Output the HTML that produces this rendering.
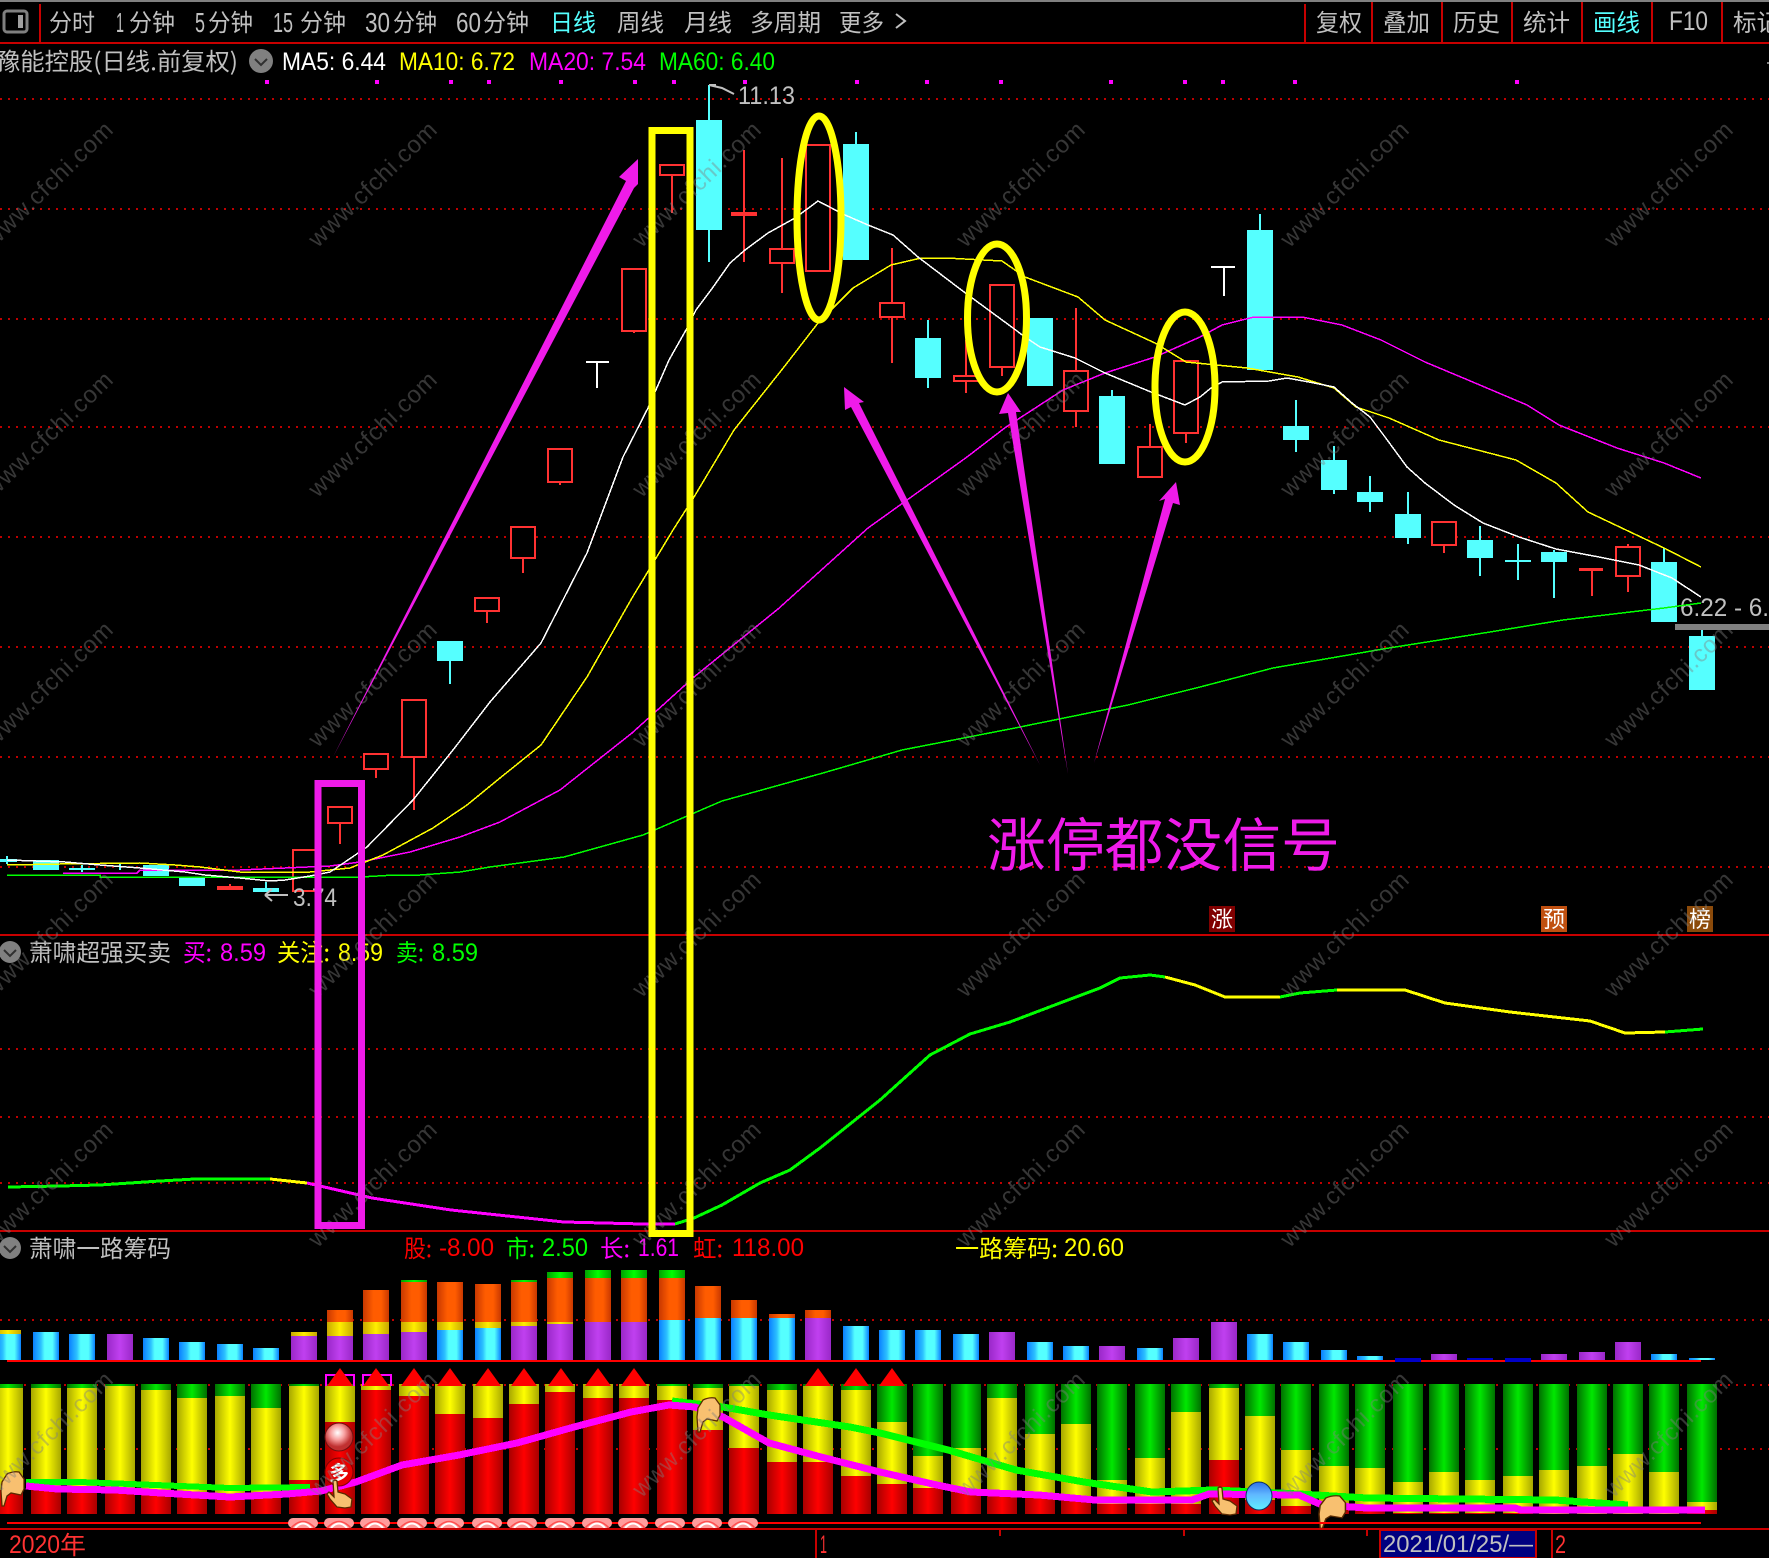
<!DOCTYPE html>
<html lang="zh"><head><meta charset="utf-8"><title>豫能控股</title>
<style>
html,body{margin:0;padding:0;background:#000;overflow:hidden}
svg{display:block;position:absolute;left:0;top:0}
text{font-family:"Liberation Sans","Noto Sans CJK SC",sans-serif}
.w text{font-size:24px;fill:#808080;opacity:.42;text-anchor:middle}
.c{font-family:"Noto Sans CJK SC","Liberation Sans",sans-serif}
.u rect{width:26px}
.l rect{width:30px;y:1384px}
.r rect{height:130px}
.q{shape-rendering:crispEdges}
</style></head><body>
<svg width="1769" height="1558" viewBox="0 0 1769 1558" xmlns="http://www.w3.org/2000/svg">
<defs>
<linearGradient id="c"><stop offset="0" stop-color="#0a80ff"/><stop offset=".3" stop-color="#2cc0ff"/><stop offset=".45" stop-color="#55ffff"/><stop offset=".75" stop-color="#55ffff"/><stop offset="1" stop-color="#0a80ff"/></linearGradient>
<linearGradient id="p"><stop offset="0" stop-color="#9a28c8"/><stop offset=".5" stop-color="#c040f0"/><stop offset="1" stop-color="#9a28c8"/></linearGradient>
<linearGradient id="o"><stop offset="0" stop-color="#c83800"/><stop offset=".4" stop-color="#ff5c00"/><stop offset=".7" stop-color="#ff5c00"/><stop offset="1" stop-color="#c83800"/></linearGradient>
<linearGradient id="e"><stop offset="0" stop-color="#c8a800"/><stop offset=".5" stop-color="#ffee00"/><stop offset="1" stop-color="#c8a800"/></linearGradient>
<linearGradient id="g"><stop offset="0" stop-color="#00a000"/><stop offset=".5" stop-color="#00ff00"/><stop offset="1" stop-color="#00a000"/></linearGradient>
<linearGradient id="R"><stop offset="0" stop-color="#a80000"/><stop offset=".5" stop-color="#ff0000"/><stop offset="1" stop-color="#a80000"/></linearGradient>
<linearGradient id="Y"><stop offset="0" stop-color="#a8a800"/><stop offset=".5" stop-color="#ffff00"/><stop offset="1" stop-color="#a8a800"/></linearGradient>
<linearGradient id="G"><stop offset="0" stop-color="#007000"/><stop offset=".5" stop-color="#00e800"/><stop offset="1" stop-color="#007000"/></linearGradient>
<radialGradient id="b1" cx=".45" cy=".35"><stop offset="0" stop-color="#ffffff"/><stop offset=".5" stop-color="#f8a0a0"/><stop offset="1" stop-color="#c03030"/></radialGradient>
<linearGradient id="b2" x2="0" y2="1"><stop offset="0" stop-color="#3070e8"/><stop offset=".45" stop-color="#60b8ff"/><stop offset="1" stop-color="#60f0ff"/></linearGradient>
<path id="h" d="M1 10L6 2Q12 -1 18 0L23 7L23 17L20 23L10 21L6 24L3 34L1 34L0 19Z" fill="#f8c070" stroke="#5a2a00" stroke-width="1.3"/>
<path id="k" d="M6 2Q8 0 10 2L11 13L18 15L25 20L24 28L18 29L10 28L3 20L0 15L2 13L7 18Z" fill="#f8c070" stroke="#5a2a00" stroke-width="1.3"/>
<g id="pl"><rect x="-15" y="0" width="30" height="10" rx="5" fill="#ff9c9c"/><path d="M-12 10Q0 -3 12 10" fill="none" stroke="#ff5050" stroke-width="1.5"/><path d="M-8 10Q0 1 8 10" fill="none" stroke="#fff" stroke-width="2"/></g>
</defs>
<rect width="1769" height="1558" fill="#000"/>
<rect width="1769" height="2" fill="#808080"/>

<!-- dotted grid -->
<path class="q" d="M0 99H1769M0 209H1769M0 319H1769M0 427H1769M0 537H1769M0 647H1769M0 757H1769M0 867H1769M0 1049H1769M0 1117H1769M0 1183H1769M0 1320H1769M0 1385H1769M0 1449H1769" stroke="#c00000" stroke-width="2" stroke-dasharray="2 6" fill="none"/>

<!-- toolbar -->
<g fill="#c0c0c0" font-size="24">
<rect x="4" y="11" width="23" height="21" rx="3" fill="none" stroke="#808080" stroke-width="3"/><rect x="18" y="15" width="5" height="13" fill="#a0a0a0"/>
<text class="c" x="49" y="31" textLength="46" lengthAdjust="spacingAndGlyphs">分时</text>
<text x="116" y="32" font-size="28" textLength="8" lengthAdjust="spacingAndGlyphs">1</text><text class="c" x="129" y="31" textLength="46" lengthAdjust="spacingAndGlyphs">分钟</text>
<text x="195" y="32" font-size="28" textLength="10" lengthAdjust="spacingAndGlyphs">5</text><text class="c" x="208" y="31" textLength="45" lengthAdjust="spacingAndGlyphs">分钟</text>
<text x="273" y="32" font-size="28" textLength="20" lengthAdjust="spacingAndGlyphs">15</text><text class="c" x="300" y="31" textLength="46" lengthAdjust="spacingAndGlyphs">分钟</text>
<text x="365" y="32" font-size="28" textLength="25" lengthAdjust="spacingAndGlyphs">30</text><text class="c" x="393" y="31" textLength="44" lengthAdjust="spacingAndGlyphs">分钟</text>
<text x="456" y="32" font-size="28" textLength="25" lengthAdjust="spacingAndGlyphs">60</text><text class="c" x="483" y="31" textLength="46" lengthAdjust="spacingAndGlyphs">分钟</text>
<text class="c" x="550" y="31" textLength="46" lengthAdjust="spacingAndGlyphs" fill="#55ffff">日线</text>
<text class="c" x="617" y="31" textLength="47" lengthAdjust="spacingAndGlyphs">周线</text>
<text class="c" x="684" y="31" textLength="48" lengthAdjust="spacingAndGlyphs">月线</text>
<text class="c" x="750" y="31" textLength="71" lengthAdjust="spacingAndGlyphs">多周期</text>
<text class="c" x="839" y="31" textLength="45" lengthAdjust="spacingAndGlyphs">更多</text>
<path d="M896 14L905 21L896 28" fill="none" stroke="#c0c0c0" stroke-width="2"/>
<text class="c" x="1316" y="31" textLength="46" lengthAdjust="spacingAndGlyphs">复权</text>
<text class="c" x="1383" y="31" textLength="47" lengthAdjust="spacingAndGlyphs">叠加</text>
<text class="c" x="1453" y="31" textLength="47" lengthAdjust="spacingAndGlyphs">历史</text>
<text class="c" x="1523" y="31" textLength="47" lengthAdjust="spacingAndGlyphs">统计</text>
<text class="c" x="1593" y="31" textLength="47" lengthAdjust="spacingAndGlyphs" fill="#55ffff">画线</text>
<text x="1669" y="30" font-size="27" textLength="39" lengthAdjust="spacingAndGlyphs">F10</text>
<text class="c" x="1733" y="31" textLength="47" lengthAdjust="spacingAndGlyphs">标记</text>
</g>
<path class="q" d="M40 4V42M1305 4V42M1372 2V42M1442 2V42M1512 2V42M1582 2V42M1652 2V42M1722 2V42" stroke="#c80000" stroke-width="2"/>
<rect y="42" width="1769" height="2" fill="#c80000"/>

<!-- header row -->
<text class="c" x="-4" y="70" font-size="24" fill="#c0c0c0" textLength="242" lengthAdjust="spacingAndGlyphs">豫能控股(日线.前复权)</text>
<circle cx="261" cy="61" r="12" fill="#808080"/><path d="M255 59L261 65L267 59" fill="none" stroke="#303030" stroke-width="2"/>
<g font-size="25">
<text x="282" y="70" fill="#fff" textLength="104" lengthAdjust="spacingAndGlyphs">MA5: 6.44</text>
<text x="399" y="70" fill="#ffff00" textLength="116" lengthAdjust="spacingAndGlyphs">MA10: 6.72</text>
<text x="529" y="70" fill="#ff00ff" textLength="117" lengthAdjust="spacingAndGlyphs">MA20: 7.54</text>
<text x="659" y="70" fill="#00ff00" textLength="116" lengthAdjust="spacingAndGlyphs">MA60: 6.40</text>
</g>
<path class="q" d="M265 80h4v4h-4zM375 80h4v4h-4zM449 80h4v4h-4zM487 80h4v4h-4zM559 80h4v4h-4zM633 80h4v4h-4zM672 80h4v4h-4zM743 80h4v4h-4zM855 80h4v4h-4zM925 80h4v4h-4zM999 80h4v4h-4zM1109 80h4v4h-4zM1183 80h4v4h-4zM1221 80h4v4h-4zM1293 80h4v4h-4zM1515 80h4v4h-4z" fill="#ff00ff"/>
<rect x="1767" y="62" width="2" height="2" fill="#808080"/>

<!-- candles -->
<g class="q">
<path d="M340 823V844M376 769V778M414 757V810M487 611V623M523 558V573M560 482V485M634 331V333M672 175V213M744 150V262M782 158V249M782 263V293M892 248V303M892 317V363M966 340V376M966 381V393M1002 367V376M1076 308V371M1076 411V427M1150 424V447M1186 433V443M1444 545V553M1592 569V596M1628 544V547M1628 576V592" stroke="#ff3232" stroke-width="2" fill="none"/>
<g fill="#000" stroke="#ff3232" stroke-width="2">
<rect x="293" y="850" width="24" height="41"/><rect x="328" y="807" width="24" height="16"/><rect x="364" y="754" width="24" height="15"/><rect x="402" y="700" width="24" height="57"/><rect x="475" y="598" width="24" height="13"/><rect x="511" y="527" width="24" height="31"/><rect x="548" y="449" width="24" height="33"/><rect x="622" y="269" width="24" height="62"/><rect x="660" y="165" width="24" height="10"/><rect x="770" y="249" width="24" height="14"/><rect x="806" y="145" width="24" height="126"/><rect x="880" y="303" width="24" height="14"/><rect x="954" y="376" width="24" height="5"/><rect x="990" y="285" width="24" height="82"/><rect x="1064" y="371" width="24" height="40"/><rect x="1138" y="447" width="24" height="30"/><rect x="1174" y="361" width="24" height="72"/><rect x="1432" y="522" width="24" height="23"/><rect x="1616" y="547" width="24" height="29"/>
</g>
<path d="M217 886h26v4h-26zM731 212h26v4h-26zM1579 568h24v3h-24z" fill="#ff3232"/><rect x="229" y="884" width="2" height="3" fill="#ff3232"/>
<path d="M450 661V684M709 85V120M709 230V262M856 132V144M928 320V338M928 378V388M1112 390V396M1260 214V230M1296 400V426M1296 440V452M1334 446V460M1334 490V494M1370 476V492M1370 502V512M1408 492V514M1408 538V544M1480 526V540M1480 558V576M1518 544V580M1554 550V552M1554 562V598M1664 548V562M1702 630V636M82 865V872M120 863V870M266 882V888M7 856V864" stroke="#55ffff" stroke-width="2" fill="none"/>
<path d="M437 641h26v20h-26zM696 120h26v110h-26zM843 144h26v116h-26zM915 338h26v40h-26zM1027 318h26v68h-26zM1099 396h26v68h-26zM1247 230h26v140h-26zM1283 426h26v14h-26zM1321 460h26v30h-26zM1357 492h26v10h-26zM1395 514h26v24h-26zM1467 540h26v18h-26zM1505 560h26v2h-26zM1541 552h26v10h-26zM1651 562h26v60h-26zM1689 636h26v54h-26zM33 860h26v10h-26zM143 865h26v11h-26zM179 878h26v8h-26zM253 888h26v4h-26zM69 868h26v2h-26zM0 859h17v3h-17z" fill="#55ffff"/>
<path d="M586 362H609M597 362V388M1211 267H1235M1224 267V296" stroke="#fff" stroke-width="2" fill="none"/>
</g>
<rect x="1675" y="624" width="94" height="6" fill="#808080"/>
<text x="1680" y="616" font-size="25" fill="#c0c0c0" textLength="89" lengthAdjust="spacingAndGlyphs">6.22 - 6.</text>
<path d="M709 85L722 88L734 94" fill="none" stroke="#c0c0c0" stroke-width="2"/><path d="M709 85H716" stroke="#c0c0c0" stroke-width="2"/>
<text x="738" y="104" font-size="25" fill="#c0c0c0" textLength="57" lengthAdjust="spacingAndGlyphs">11.13</text>
<path d="M265 895H288M265 895L272 889M265 895L272 901" fill="none" stroke="#c0c0c0" stroke-width="2"/>
<text x="293" y="906" font-size="25" fill="#c0c0c0" textLength="44" lengthAdjust="spacingAndGlyphs">3.74</text>

<!-- moving averages -->
<g fill="none" stroke-width="1.5" class="q">
<polyline stroke="#00ff00" points="7,875 100,875 100,877 360,877 395,875 420,875 460,872 490,867 564,857 643,835 722,801 823,773 902,750 1015,728 1128,705 1200,687 1273,668 1389,648 1490,632 1563,620 1664,608 1701,603"/>
<polyline stroke="#ff00ff" points="63,873 137,873 140,870 240,870 330,866 360,862 410,852 460,837 500,822 560,790 632,733 694,677 778,609 868,528 967,457 1006,427 1063,390 1105,373 1155,357 1200,337 1222,325 1254,317 1302,317 1342,325 1381,340 1425,362 1468,380 1527,405 1559,425 1617,448 1664,463 1701,478"/>
<polyline stroke="#ffff00" points="7,865 60,864 140,863 175,865 200,867 240,872 310,872 350,868 383,855 433,828 467,805 500,778 541,745 587,677 632,598 673,530 694,497 734,430 784,367 818,323 853,288 891,265 921,258 946,258 1002,261 1025,277 1078,297 1105,320 1155,343 1186,362 1247,368 1298,377 1334,388 1356,407 1389,418 1439,440 1516,460 1556,483 1588,512 1664,548 1701,567"/>
<polyline stroke="#ffffff" points="7,860 65,862 100,865 140,868 185,872 205,875 240,878 270,881 285,880 310,876 330,872 345,862 367,847 413,800 453,750 490,702 541,643 587,553 623,457 648,408 669,360 686,330 696,310 711,290 730,263 745,250 768,233 795,218 818,201 845,215 868,225 893,235 918,257 964,292 1013,328 1025,337 1040,347 1075,358 1105,373 1151,392 1185,405 1200,397 1211,388 1222,382 1269,381 1287,378 1309,382 1334,387 1352,403 1370,417 1385,437 1407,467 1425,483 1454,505 1483,523 1519,537 1556,549 1599,557 1639,565 1672,578 1701,597"/>
</g>

<!-- panel separators -->
<rect y="934" width="1769" height="2" fill="#c80000"/>
<rect y="1230" width="1769" height="2" fill="#c80000"/>
<rect x="1209" y="906" width="26" height="26" fill="#800000"/><text class="c" x="1222" y="927" font-size="22" fill="#fff" text-anchor="middle">涨</text>
<rect x="1541" y="906" width="26" height="26" fill="#c05010"/><text class="c" x="1554" y="927" font-size="22" fill="#fff" text-anchor="middle">预</text>
<rect x="1687" y="906" width="26" height="26" fill="#8b4a0a"/><text class="c" x="1700" y="927" font-size="22" fill="#fff" text-anchor="middle">榜</text>

<!-- panel 2 -->
<circle cx="10" cy="952" r="11" fill="#808080"/><path d="M4 950L10 956L16 950" fill="none" stroke="#303030" stroke-width="2"/>
<text class="c" x="29" y="961" font-size="24" fill="#c0c0c0" textLength="142" lengthAdjust="spacingAndGlyphs">萧啸超强买卖</text>
<text class="c" x="183" y="961" font-size="24" fill="#ff00ff" textLength="29" lengthAdjust="spacingAndGlyphs">买:</text><text x="220" y="961" font-size="25" fill="#ff00ff" textLength="46" lengthAdjust="spacingAndGlyphs">8.59</text>
<text class="c" x="277" y="961" font-size="24" fill="#ffff00" textLength="53" lengthAdjust="spacingAndGlyphs">关注:</text><text x="338" y="961" font-size="25" fill="#ffff00" textLength="45" lengthAdjust="spacingAndGlyphs">8.59</text>
<text class="c" x="396" y="961" font-size="24" fill="#00ff00" textLength="28" lengthAdjust="spacingAndGlyphs">卖:</text><text x="432" y="961" font-size="25" fill="#00ff00" textLength="46" lengthAdjust="spacingAndGlyphs">8.59</text>
<g fill="none" stroke-width="3" class="q">
<polyline stroke="#00ff00" points="8,1187 60,1186 100,1185 160,1181 195,1179 270,1179"/>
<polyline stroke="#ffff00" points="270,1179 307,1183"/>
<polyline stroke="#ff00ff" points="307,1183 320,1186 372,1198 451,1210 564,1222 643,1224 675,1224"/>
<polyline stroke="#00ff00" points="675,1224 694,1218 722,1205 760,1183 790,1170 820,1148 855,1120 880,1100 930,1055 970,1034 1010,1022 1060,1003 1100,988 1120,978 1150,975 1165,977"/>
<polyline stroke="#ffff00" points="1165,977 1195,985 1225,997 1280,997"/>
<polyline stroke="#00ff00" points="1280,997 1300,993 1337,990"/>
<polyline stroke="#ffff00" points="1337,990 1405,990 1445,1003 1510,1012 1590,1021 1625,1033 1665,1032"/>
<polyline stroke="#00ff00" points="1665,1032 1703,1029"/>
</g>

<!-- panel 3 title -->
<circle cx="10" cy="1248" r="11" fill="#808080"/><path d="M4 1246L10 1252L16 1246" fill="none" stroke="#303030" stroke-width="2"/>
<text class="c" x="29" y="1257" font-size="24" fill="#c0c0c0" textLength="142" lengthAdjust="spacingAndGlyphs">萧啸一路筹码</text>
<g font-size="24">
<text class="c" x="404" y="1257" fill="#ff0000" textLength="28" lengthAdjust="spacingAndGlyphs">股:</text><text x="439" y="1256" font-size="25" fill="#ff0000" textLength="55" lengthAdjust="spacingAndGlyphs">-8.00</text>
<text class="c" x="506" y="1257" fill="#00ff00" textLength="29" lengthAdjust="spacingAndGlyphs">市:</text><text x="542" y="1256" font-size="25" fill="#00ff00" textLength="46" lengthAdjust="spacingAndGlyphs">2.50</text>
<text class="c" x="600" y="1257" fill="#ff00ff" textLength="30" lengthAdjust="spacingAndGlyphs">长:</text><text x="638" y="1256" font-size="25" fill="#ff00ff" textLength="41" lengthAdjust="spacingAndGlyphs">1.61</text>
<text class="c" x="693" y="1257" fill="#ff0000" textLength="30" lengthAdjust="spacingAndGlyphs">虹:</text><text x="732" y="1256" font-size="25" fill="#ff0000" textLength="72" lengthAdjust="spacingAndGlyphs">118.00</text>
<text class="c" x="955" y="1257" fill="#ffff00" textLength="103" lengthAdjust="spacingAndGlyphs">一路筹码:</text><text x="1064" y="1256" font-size="25" fill="#ffff00" textLength="60" lengthAdjust="spacingAndGlyphs">20.60</text>
</g>

<!-- upper bars -->
<g class="u q">
<g fill="url(#c)">
<rect x="-5" y="1334" height="26"/><rect x="33" y="1332" height="28"/><rect x="69" y="1334" height="26"/><rect x="143" y="1338" height="22"/><rect x="179" y="1342" height="18"/><rect x="217" y="1344" height="16"/><rect x="253" y="1348" height="12"/><rect x="437" y="1330" height="30"/><rect x="475" y="1328" height="32"/><rect x="659" y="1320" height="40"/><rect x="695" y="1318" height="42"/><rect x="731" y="1318" height="42"/><rect x="769" y="1318" height="42"/><rect x="843" y="1326" height="34"/><rect x="879" y="1330" height="30"/><rect x="915" y="1330" height="30"/><rect x="953" y="1334" height="26"/><rect x="1027" y="1342" height="18"/><rect x="1063" y="1346" height="14"/><rect x="1137" y="1348" height="12"/><rect x="1247" y="1334" height="26"/><rect x="1283" y="1342" height="18"/><rect x="1321" y="1350" height="10"/><rect x="1357" y="1356" height="4"/><rect x="1651" y="1354" height="6"/><rect x="1689" y="1358" height="2"/>
</g>
<g fill="url(#p)">
<rect x="107" y="1334" height="26"/><rect x="291" y="1336" height="24"/><rect x="327" y="1336" height="24"/><rect x="363" y="1334" height="26"/><rect x="401" y="1332" height="28"/><rect x="511" y="1326" height="34"/><rect x="547" y="1324" height="36"/><rect x="585" y="1322" height="38"/><rect x="621" y="1322" height="38"/><rect x="805" y="1318" height="42"/><rect x="989" y="1332" height="28"/><rect x="1099" y="1346" height="14"/><rect x="1173" y="1338" height="22"/><rect x="1211" y="1322" height="38"/><rect x="1431" y="1354" height="6"/><rect x="1541" y="1354" height="6"/><rect x="1579" y="1352" height="8"/><rect x="1615" y="1342" height="18"/>
</g>
<g fill="url(#o)">
<rect x="327" y="1310" height="12"/><rect x="363" y="1290" height="32"/><rect x="401" y="1282" height="40"/><rect x="437" y="1282" height="40"/><rect x="475" y="1284" height="38"/><rect x="511" y="1282" height="40"/><rect x="547" y="1278" height="44"/><rect x="585" y="1278" height="44"/><rect x="621" y="1278" height="44"/><rect x="659" y="1278" height="42"/><rect x="695" y="1286" height="32"/><rect x="731" y="1300" height="18"/><rect x="769" y="1314" height="4"/><rect x="805" y="1310" height="8"/>
</g>
<g fill="url(#e)">
<rect x="-5" y="1330" height="4"/><rect x="291" y="1332" height="4"/><rect x="327" y="1322" height="14"/><rect x="363" y="1322" height="12"/><rect x="401" y="1322" height="10"/><rect x="437" y="1322" height="8"/><rect x="475" y="1322" height="6"/><rect x="511" y="1322" height="4"/><rect x="547" y="1322" height="2"/>
</g>
<g fill="url(#g)">
<rect x="401" y="1280" height="2"/><rect x="511" y="1280" height="2"/><rect x="547" y="1272" height="6"/><rect x="585" y="1270" height="8"/><rect x="621" y="1270" height="8"/><rect x="659" y="1270" height="8"/>
</g>
</g>
<rect x="7" y="1360" width="1694" height="2" fill="#ff0000"/>
<path class="q" d="M1395 1358h26v4h-26zM1467 1358h26v2h-26zM1505 1358h26v4h-26z" fill="#0000c8"/>

<!-- lower bars -->
<g class="l q">
<g class="r" fill="url(#R)">
<rect x="-7"/><rect x="31"/><rect x="67"/><rect x="105"/><rect x="141"/><rect x="177"/><rect x="215"/><rect x="251"/><rect x="289"/><rect x="325"/><rect x="361"/><rect x="399"/><rect x="435"/><rect x="473"/><rect x="509"/><rect x="545"/><rect x="583"/><rect x="619"/><rect x="657"/><rect x="693"/><rect x="729"/><rect x="767"/><rect x="803"/><rect x="841"/><rect x="877"/><rect x="913"/><rect x="951"/><rect x="987"/><rect x="1025"/><rect x="1061"/><rect x="1097"/><rect x="1135"/><rect x="1171"/><rect x="1209"/><rect x="1245"/><rect x="1281"/><rect x="1319"/><rect x="1355"/><rect x="1393"/><rect x="1429"/><rect x="1465"/><rect x="1503"/><rect x="1539"/><rect x="1577"/><rect x="1613"/><rect x="1649"/><rect x="1687"/>
</g>
<g fill="url(#Y)">
<rect x="-7" height="106"/><rect x="31" height="106"/><rect x="67" height="108"/><rect x="105" height="109"/><rect x="141" height="111"/><rect x="177" height="111"/><rect x="215" height="114"/><rect x="251" height="114"/><rect x="289" height="96"/><rect x="325" height="38"/><rect x="361" height="6"/><rect x="399" height="12"/><rect x="435" height="30"/><rect x="473" height="34"/><rect x="509" height="20"/><rect x="545" height="8"/><rect x="583" height="14"/><rect x="619" height="14"/><rect x="657" height="16"/><rect x="693" height="46"/><rect x="729" height="64"/><rect x="767" height="78"/><rect x="803" height="78"/><rect x="841" height="92"/><rect x="877" height="100"/><rect x="913" height="104"/><rect x="951" height="108"/><rect x="987" height="110"/><rect x="1025" height="114"/><rect x="1061" height="116"/><rect x="1097" height="120"/><rect x="1135" height="120"/><rect x="1171" height="120"/><rect x="1209" height="76"/><rect x="1245" height="116"/><rect x="1281" height="122"/><rect x="1319" height="123"/><rect x="1355" height="126"/><rect x="1393" height="129"/><rect x="1429" height="129"/><rect x="1465" height="129"/><rect x="1503" height="129"/><rect x="1539" height="130"/><rect x="1577" height="130"/><rect x="1613" height="130"/><rect x="1649" height="130"/><rect x="1687" height="126"/>
</g>
<g fill="url(#G)">
<rect x="-7" height="4"/><rect x="31" height="4"/><rect x="67" height="4"/><rect x="105" height="2"/><rect x="141" height="6"/><rect x="177" height="14"/><rect x="215" height="12"/><rect x="251" height="24"/><rect x="289" height="2"/><rect x="325" height="2"/><rect x="657" height="2"/><rect x="693" height="4"/><rect x="729" height="2"/><rect x="767" height="6"/><rect x="803" height="2"/><rect x="841" height="6"/><rect x="877" height="38"/><rect x="913" height="72"/><rect x="951" height="64"/><rect x="987" height="14"/><rect x="1025" height="50"/><rect x="1061" height="40"/><rect x="1097" height="96"/><rect x="1135" height="74"/><rect x="1171" height="28"/><rect x="1209" height="4"/><rect x="1245" height="32"/><rect x="1281" height="66"/><rect x="1319" height="82"/><rect x="1355" height="84"/><rect x="1393" height="98"/><rect x="1429" height="88"/><rect x="1465" height="96"/><rect x="1503" height="92"/><rect x="1539" height="86"/><rect x="1577" height="82"/><rect x="1613" height="70"/><rect x="1649" height="88"/><rect x="1687" height="118"/>
</g>
</g>
<path class="q" d="M326 1386V1375H354V1386M363 1386V1375H391V1386" fill="none" stroke="#ff00ff" stroke-width="2"/>
<path d="M327 1386L340 1368L353 1386ZM363 1386L376 1368L389 1386ZM401 1386L414 1368L427 1386ZM437 1386L450 1368L463 1386ZM475 1386L488 1368L501 1386ZM511 1386L524 1368L537 1386ZM548 1386L561 1368L574 1386ZM585 1386L598 1368L611 1386ZM621 1386L634 1368L647 1386ZM805 1386L818 1368L831 1386ZM843 1386L856 1368L869 1386ZM879 1386L892 1368L905 1386Z" fill="#ff0000"/>

<!-- thick lines -->
<g fill="none" class="q" stroke-linejoin="round">
<polyline stroke="#00ff00" stroke-width="6" points="26,1482 80,1482 155,1485 230,1488 310,1487"/>
<polyline stroke="#00ff00" stroke-width="7" points="672,1401 723,1407 769,1415 850,1427 880,1433 948,1450 1016,1470 1084,1482 1152,1492 1214,1490 1299,1494 1367,1498 1555,1500 1628,1505"/>
<polyline stroke="#ff00ff" stroke-width="7" points="26,1486 57,1489 115,1490 161,1493 230,1497 287,1494 321,1491 356,1482 402,1465 459,1455 517,1443 574,1427 631,1412 669,1405 695,1407 723,1417 769,1443 821,1457 880,1472 937,1485 971,1492 1039,1495 1095,1500 1192,1500 1209,1494 1299,1495 1322,1505 1367,1508 1515,1508 1521,1510 1705,1510"/>
</g>

<!-- balls and hands -->
<ellipse cx="339" cy="1437" rx="14" ry="14" fill="url(#b1)" stroke="#701010"/>
<circle cx="339" cy="1472" r="14" fill="#e80000" stroke="#800000"/>
<text class="c" x="339" y="1480" font-size="20" font-weight="700" fill="#fff" text-anchor="middle">多</text>
<ellipse cx="1259" cy="1496" rx="13" ry="14" fill="url(#b2)" stroke="#0a3060"/>
<use href="#h" transform="translate(1,1472)"/>
<use href="#k" transform="translate(327,1479)"/>
<use href="#h" transform="translate(697,1398)"/>
<use href="#k" transform="translate(1212,1486)"/>
<use href="#h" transform="translate(1319,1496) scale(1.15,.95)"/>

<!-- red line + pills -->
<rect x="7" y="1522" width="1694" height="2" fill="#ff0000"/>
<g>
<use href="#pl" transform="translate(303,1518)"/><use href="#pl" transform="translate(339,1518)"/><use href="#pl" transform="translate(375,1518)"/><use href="#pl" transform="translate(412,1518)"/><use href="#pl" transform="translate(449,1518)"/><use href="#pl" transform="translate(487,1518)"/><use href="#pl" transform="translate(522,1518)"/><use href="#pl" transform="translate(560,1518)"/><use href="#pl" transform="translate(597,1518)"/><use href="#pl" transform="translate(633,1518)"/><use href="#pl" transform="translate(670,1518)"/><use href="#pl" transform="translate(707,1518)"/><use href="#pl" transform="translate(743,1518)"/>
</g>
<rect y="1528" width="1769" height="2" fill="#c80000"/>

<!-- bottom axis -->
<text x="9" y="1553" font-size="25" fill="#ff3232" textLength="51" lengthAdjust="spacingAndGlyphs">2020</text><text class="c" x="60" y="1554" font-size="25" fill="#ff3232" textLength="26" lengthAdjust="spacingAndGlyphs">年</text>
<path class="q" d="M816 1530V1558M1000 1530V1536M1184 1530V1536M1367 1530V1536M1552 1530V1558" stroke="#c80000" stroke-width="2"/>
<text x="820" y="1553" font-size="25" fill="#ff3232" textLength="7" lengthAdjust="spacingAndGlyphs">1</text>
<rect x="1380" y="1530" width="156" height="28" fill="#000080" stroke="#c80000" stroke-width="2"/>
<text x="1383" y="1552" font-size="24" fill="#c0c0c0" textLength="150" lengthAdjust="spacingAndGlyphs">2021/01/25/—</text>
<text x="1555" y="1553" font-size="25" fill="#ff3232" textLength="11" lengthAdjust="spacingAndGlyphs">2</text>

<!-- watermark -->
<g class="w">
<text transform="translate(54,190) rotate(-44)" textLength="168">www.cfchi.com</text><text transform="translate(378,190) rotate(-44)" textLength="168">www.cfchi.com</text><text transform="translate(702,190) rotate(-44)" textLength="168">www.cfchi.com</text><text transform="translate(1026,190) rotate(-44)" textLength="168">www.cfchi.com</text><text transform="translate(1350,190) rotate(-44)" textLength="168">www.cfchi.com</text><text transform="translate(1674,190) rotate(-44)" textLength="168">www.cfchi.com</text>
<text transform="translate(54,440) rotate(-44)" textLength="168">www.cfchi.com</text><text transform="translate(378,440) rotate(-44)" textLength="168">www.cfchi.com</text><text transform="translate(702,440) rotate(-44)" textLength="168">www.cfchi.com</text><text transform="translate(1026,440) rotate(-44)" textLength="168">www.cfchi.com</text><text transform="translate(1350,440) rotate(-44)" textLength="168">www.cfchi.com</text><text transform="translate(1674,440) rotate(-44)" textLength="168">www.cfchi.com</text>
<text transform="translate(54,690) rotate(-44)" textLength="168">www.cfchi.com</text><text transform="translate(378,690) rotate(-44)" textLength="168">www.cfchi.com</text><text transform="translate(702,690) rotate(-44)" textLength="168">www.cfchi.com</text><text transform="translate(1026,690) rotate(-44)" textLength="168">www.cfchi.com</text><text transform="translate(1350,690) rotate(-44)" textLength="168">www.cfchi.com</text><text transform="translate(1674,690) rotate(-44)" textLength="168">www.cfchi.com</text>
<text transform="translate(54,940) rotate(-44)" textLength="168">www.cfchi.com</text><text transform="translate(378,940) rotate(-44)" textLength="168">www.cfchi.com</text><text transform="translate(702,940) rotate(-44)" textLength="168">www.cfchi.com</text><text transform="translate(1026,940) rotate(-44)" textLength="168">www.cfchi.com</text><text transform="translate(1350,940) rotate(-44)" textLength="168">www.cfchi.com</text><text transform="translate(1674,940) rotate(-44)" textLength="168">www.cfchi.com</text>
<text transform="translate(54,1190) rotate(-44)" textLength="168">www.cfchi.com</text><text transform="translate(378,1190) rotate(-44)" textLength="168">www.cfchi.com</text><text transform="translate(702,1190) rotate(-44)" textLength="168">www.cfchi.com</text><text transform="translate(1026,1190) rotate(-44)" textLength="168">www.cfchi.com</text><text transform="translate(1350,1190) rotate(-44)" textLength="168">www.cfchi.com</text><text transform="translate(1674,1190) rotate(-44)" textLength="168">www.cfchi.com</text>
<text transform="translate(54,1440) rotate(-44)" textLength="168">www.cfchi.com</text><text transform="translate(378,1440) rotate(-44)" textLength="168">www.cfchi.com</text><text transform="translate(702,1440) rotate(-44)" textLength="168">www.cfchi.com</text><text transform="translate(1026,1440) rotate(-44)" textLength="168">www.cfchi.com</text><text transform="translate(1350,1440) rotate(-44)" textLength="168">www.cfchi.com</text><text transform="translate(1674,1440) rotate(-44)" textLength="168">www.cfchi.com</text>
</g>

<!-- annotations -->
<rect x="318" y="783.500" width="43.500" height="442" fill="none" stroke="#ef1be9" stroke-width="7"/>
<rect x="652" y="130.500" width="38" height="1103" fill="none" stroke="#ffff00" stroke-width="7"/>
<g fill="none" stroke="#ffff00" stroke-width="7">
<ellipse cx="819" cy="218" rx="22" ry="102"/>
<ellipse cx="997" cy="318" rx="29.500" ry="74"/>
<ellipse cx="1185" cy="387" rx="30" ry="75"/>
</g>
<g fill="#ef1be9">
<path d="M638 159L619 177L626 181L333 757L634 188L638 184Z"/>
<path d="M844 387L845 410L851 407L1040 765L859 403L864 402Z"/>
<path d="M1008 393L999 414L1008 413L1068 774L1016 412L1021 412Z"/>
<path d="M1176 482L1159 501L1165 499L1094 763L1173 503L1180 505Z"/>
</g>
<text class="c" x="987" y="866" font-size="58" fill="#ef1be9" textLength="353" lengthAdjust="spacingAndGlyphs">涨停都没信号</text>
</svg>
</body></html>
